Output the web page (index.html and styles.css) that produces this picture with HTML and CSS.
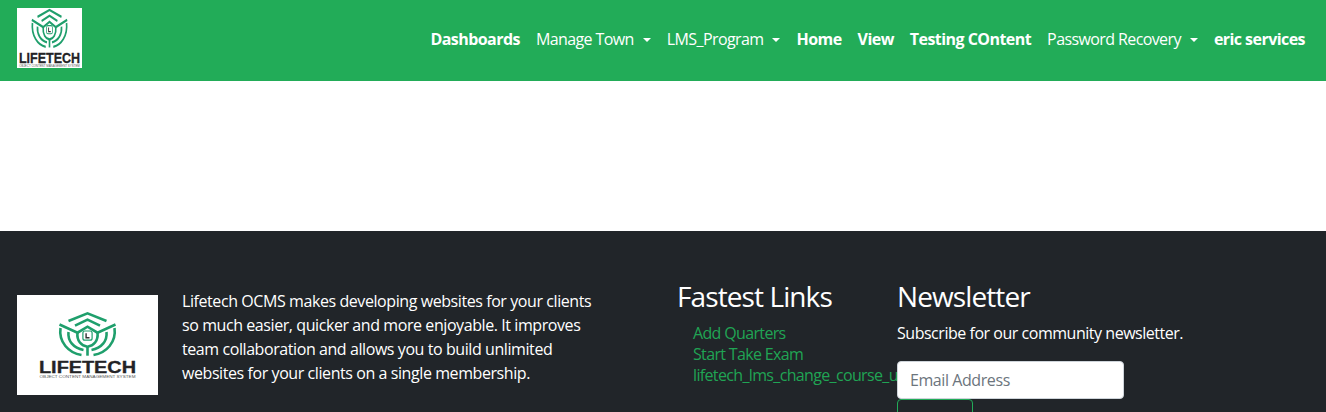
FILE: index.html
```html
<!DOCTYPE html>
<html lang="en">
<head>
<meta charset="utf-8">
<title>Lifetech OCMS</title>
<link rel="stylesheet" href="styles.css">
</head>
<body>
<svg class="defs" width="0" height="0" aria-hidden="true">
  <defs>
    <symbol id="logo-art" viewBox="0 0 141 100" overflow="visible">
      <g class="mark" transform="translate(70.5 0)">
        <path d="M-19 26 L0 18.3 L19 26"/>
        <path d="M-12.5 30.7 L0 24.7 L12.5 30.7"/>
        <path d="M-28 29.5 L-10 37.7 L0 31.7 L10 37.7 L28 29.5"/>
        <path d="M-10 37.7 C-11 46 -6 51 0 51.7 C6 51 11 46 10 37.7"/>
        <path d="M0 51.7 V60.7"/>
        <path d="M-27 33 C-29 47 -19 58 -6 60"/>
        <path d="M27 33 C29 47 19 58 6 60"/>
        <path d="M-19 37 C-20 46 -14 53 -4 55"/>
        <path d="M19 37 C20 46 14 53 4 55"/>
        <rect class="box" x="-4.6" y="36" width="9.2" height="9.2" rx="2"/>
        <path class="ell" d="M-1.4 38.2 V42.8 H2"/>
      </g>
      <text class="word" x="70.5" y="78" text-anchor="middle" textLength="97" lengthAdjust="spacingAndGlyphs">LIFETECH</text>
      <text class="sub" x="70.5" y="83" text-anchor="middle" textLength="96" lengthAdjust="spacingAndGlyphs">OBJECT CONTENT MANAGEMENT SYSTEM</text>
    </symbol>
  </defs>
</svg>

<nav class="navbar">
  <a class="brand" href="#" aria-label="Lifetech">
    <svg class="brand-logo" viewBox="19 16 103 68" preserveAspectRatio="none"><use href="#logo-art" width="141" height="100"/></svg>
  </a>
  <ul class="nav-list">
    <li><a class="nav-link strong" href="#">Dashboards</a></li>
    <li><a class="nav-link caret" href="#">Manage Town</a></li>
    <li><a class="nav-link caret" href="#">LMS_Program</a></li>
    <li><a class="nav-link strong" href="#">Home</a></li>
    <li><a class="nav-link strong" href="#">View</a></li>
    <li><a class="nav-link strong" href="#">Testing COntent</a></li>
    <li><a class="nav-link caret" href="#">Password Recovery</a></li>
    <li><a class="nav-link strong" href="#">eric services</a></li>
  </ul>
</nav>

<main class="content"></main>

<footer class="footer">
  <div class="about">
    <svg class="footer-logo" viewBox="0 0 141 100"><use href="#logo-art" width="141" height="100"/></svg>
    <p class="about-text">Lifetech OCMS makes developing websites for your clients<br>so much easier, quicker and more enjoyable. It improves<br>team collaboration and allows you to build unlimited<br>websites for your clients on a single membership.</p>
  </div>
  <div class="links">
    <h4 class="footer-title links-title">Fastest Links</h4>
    <ul class="link-list">
      <li><a href="#">Add Quarters</a></li>
      <li><a href="#">Start Take Exam</a></li>
      <li><a href="#">lifetech_lms_change_course_url</a></li>
    </ul>
  </div>
  <div class="newsletter">
    <h4 class="footer-title news-title">Newsletter</h4>
    <p class="news-text">Subscribe for our community newsletter.</p>
    <input class="email" type="text" placeholder="Email Address">
    <button class="submit" type="button" aria-label="Submit"></button>
  </div>
</footer>
</body>
</html>
```

FILE: styles.css
```css
* { box-sizing: border-box; }
html, body { margin: 0; padding: 0; height: 412px; overflow: hidden; }
body {
  font-family: "Open Sans", "Noto Sans", "Liberation Sans", sans-serif;
  font-size: 16px;
  line-height: 24px;
  letter-spacing: -0.42px;
  color: #fff;
  background: #fff;
}
a { text-decoration: none; color: inherit; }
ul { list-style: none; margin: 0; padding: 0; }
.defs { position: absolute; }

.mark path { fill: none; stroke: #1f9f6c; stroke-width: 2.6; }
.mark .box { fill: none; stroke: #1f9f6c; stroke-width: 1.2; }
.mark .ell { stroke: #333; stroke-width: 1.4; }
.word { font-family: "Liberation Sans", sans-serif; font-weight: 700; font-size: 16px; letter-spacing: 0; fill: #232326; stroke: #232326; stroke-width: 0.3; }
.sub { font-family: "Liberation Sans", sans-serif; font-size: 3.4px; letter-spacing: 0; fill: #555; }

.navbar {
  height: 81px;
  background: #22ac58;
  display: flex;
  align-items: center;
  justify-content: space-between;
  padding: 0 13px 0 17px;
}
.brand { display: block; height: 60px; margin-top: -5px; }
.brand-logo { display: block; width: 65px; height: 60px; background: #fff; }
.nav-list { display: flex; margin-top: -3px; }
.nav-link { display: block; padding: 0 8px; white-space: nowrap; }
.strong { font-weight: 700; letter-spacing: -0.55px; }
.caret { letter-spacing: -0.6px; }
.caret::after {
  content: "";
  display: inline-block;
  margin-left: 9px;
  vertical-align: 3px;
  border-top: 4px solid #fff;
  border-left: 4px solid transparent;
  border-right: 4px solid transparent;
}

.content { height: 150px; background: #fff; }

.footer {
  height: 181px;
  background: #212529;
  display: flex;
  padding: 48px 0 0 17px;
}
.about { width: 660px; display: flex; align-items: flex-start; gap: 24px; padding-top: 16px; flex: none; }
.footer-logo { display: block; width: 141px; height: 100px; background: #fff; flex: none; }
.about-text { margin: -6px 0 0; white-space: nowrap; }
.footer-title { margin: 0 0 8px; font-size: 28px; line-height: 34px; font-weight: 400; letter-spacing: -0.9px; }
.links { width: 220px; flex: none; }
.link-list { padding-left: 16px; margin-top: 10px; line-height: 21px; color: #20a454; white-space: nowrap; letter-spacing: -0.65px; }
.link-list li { height: 21px; }
.newsletter { width: 300px; flex: none; }
.news-text { margin: 0 0 16px; white-space: nowrap; letter-spacing: -0.47px; }
.email {
  display: block;
  width: 227px;
  height: 38px;
  padding: 6px 12px;
  font: inherit;
  letter-spacing: inherit;
  color: #212529;
  background: #fff;
  border: 1px solid #ced4da;
  border-radius: 4px;
}
.email::placeholder { color: #6c757d; opacity: 1; }
.submit {
  display: block;
  width: 76px;
  height: 38px;
  padding: 6px 12px;
  background: transparent;
  border: 1px solid #22ac58;
  border-radius: 4px;
}
```
